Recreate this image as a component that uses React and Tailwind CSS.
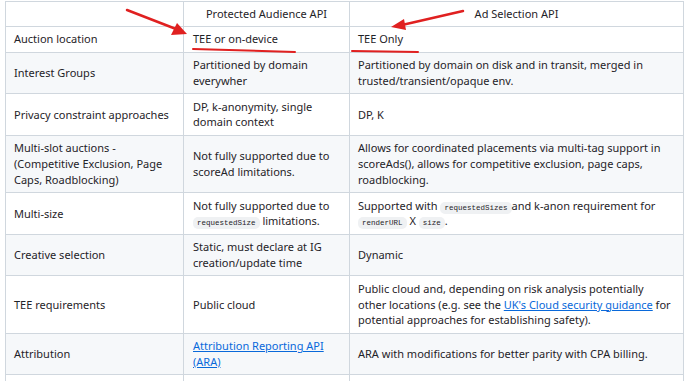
import React from "react";

function Code({ children }) {
  return (
    <code className="rounded-[5px] bg-[#eff1f3] px-[4px] py-[2px] font-['Liberation_Mono',monospace] text-[7.5px] leading-none text-[#1f2328]">
      {children}
    </code>
  );
}

function Link({ children }) {
  return <a className="text-[#0969da] underline">{children}</a>;
}

const rows = [
  ["Auction location", "TEE or on-device", "TEE Only"],
  [
    "Interest Groups",
    "Partitioned by domain everywher",
    "Partitioned by domain on disk and in transit, merged in trusted/transient/opaque env.",
  ],
  ["Privacy constraint approaches", "DP, k-anonymity, single domain context", "DP, K"],
  [
    "Multi-slot auctions - (Competitive Exclusion, Page Caps, Roadblocking)",
    "Not fully supported due to scoreAd limitations.",
    "Allows for coordinated placements via multi-tag support in scoreAds(), allows for competitive exclusion, page caps, roadblocking.",
  ],
  [
    "Multi-size",
    <>
      Not fully supported due to <Code>requestedSize</Code> limitations.
    </>,
    <>
      Supported with <Code>requestedSizes</Code>and k-anon requirement for <Code>renderURL</Code> X{" "}
      <Code>size</Code>.
    </>,
  ],
  ["Creative selection", "Static, must declare at IG creation/update time", "Dynamic"],
  [
    "TEE requirements",
    "Public cloud",
    <>
      Public cloud and, depending on risk analysis potentially
      <br />
      other locations (e.g. see the <Link>UK's Cloud security guidance</Link> for potential approaches
      for establishing safety).
    </>,
  ],
  [
    "Attribution",
    <Link>Attribution Reporting API (ARA)</Link>,
    "ARA with modifications for better parity with CPA billing.",
  ],
];

export default function App() {
  return (
    <div className="relative h-[381px] w-[689px] overflow-hidden bg-white pl-[5px] pt-[1px] font-['Noto_Sans',sans-serif] text-[11px] leading-[15.8px] text-[#1f2328]">
      <table className="w-[678px] table-fixed border-collapse">
        <colgroup>
          <col className="w-[178px]" />
          <col className="w-[166px]" />
          <col className="w-[334px]" />
        </colgroup>
        <thead>
          <tr className="bg-white">
            <th className="border border-[#d0d7de] px-[8px] py-[4px] font-normal"></th>
            <th className="border border-[#d0d7de] px-[9px] py-[4px] text-center font-normal">
              Protected Audience API
            </th>
            <th className="border border-[#d0d7de] px-[9px] py-[4px] text-center font-normal">
              Ad Selection API
            </th>
          </tr>
        </thead>
        <tbody>
          {rows.map((r, i) => (
            <tr key={i} className={i % 2 === 1 ? "bg-[#f6f8fa]" : "bg-white"}>
              <td className="border border-[#d0d7de] px-[8px] py-[4.5px] align-middle">{r[0]}</td>
              <td className="border border-[#d0d7de] px-[9px] py-[4.5px] align-middle">{r[1]}</td>
              <td className="border border-[#d0d7de] px-[8px] py-[4.5px] align-middle">{r[2]}</td>
            </tr>
          ))}
          <tr className="bg-white">
            <td className="h-[30px] border border-[#d0d7de]"></td>
            <td className="h-[30px] border border-[#d0d7de]"></td>
            <td className="h-[30px] border border-[#d0d7de]"></td>
          </tr>
        </tbody>
      </table>

      {/* red annotations */}
      <svg className="pointer-events-none absolute left-0 top-0" width="689" height="381">
        <line x1="127" y1="10" x2="176" y2="29" stroke="#e02020" strokeWidth="2.5" strokeLinecap="round" />
        <polygon points="187,34 171,35 177,23" fill="#e02020" />
        <line x1="193" y1="49" x2="295" y2="52" stroke="#e02020" strokeWidth="2" strokeLinecap="round" />
        <line x1="463" y1="11" x2="402" y2="25" stroke="#e02020" strokeWidth="2.5" strokeLinecap="round" />
        <polygon points="391,27 404,19 406,30" fill="#e02020" />
        <line x1="352" y1="51" x2="418" y2="52" stroke="#e02020" strokeWidth="2" strokeLinecap="round" />
      </svg>
    </div>
  );
}
